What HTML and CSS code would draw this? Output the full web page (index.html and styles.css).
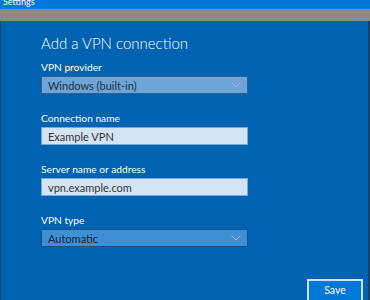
FILE: index.html
```html
<!DOCTYPE html>
<html>
<head>
<meta charset="utf-8">
<link rel="stylesheet" href="styles.css">
</head>
<body>
<div class="window">
  <div class="titlebar"><span class="apptitle">Settings</span></div>
  <div class="greybar"></div>
  <div class="panel">
    <div class="content">
      <h1 class="heading">Add a VPN connection</h1>
      <div class="field">
        <div class="label">VPN provider</div>
        <div class="select select-provider"><span>Windows (built-in)</span><svg class="chev" width="10" height="6" viewBox="0 0 10 6"><path d="M0.5 0.5 L5 5 L9.5 0.5" fill="none" stroke="#9ab7d3" stroke-width="1"/></svg></div>
      </div>
      <div class="field">
        <div class="label">Connection name</div>
        <div class="input">Example VPN</div>
      </div>
      <div class="field">
        <div class="label">Server name or address</div>
        <div class="input">vpn.example.com</div>
      </div>
      <div class="field">
        <div class="label">VPN type</div>
        <div class="select select-type"><span>Automatic</span><svg class="chev" width="10" height="6" viewBox="0 0 10 6"><path d="M0.5 0.5 L5 5 L9.5 0.5" fill="none" stroke="#8fbbe3" stroke-width="1"/></svg></div>
      </div>
    </div>
    <div class="footer">
      <button class="save">Save</button>
    </div>
  </div>
</div>
</body>
</html>
```
FILE: styles.css
```css
html, body {
  margin: 0;
  padding: 0;
}
body {
  width: 370px;
  height: 300px;
  overflow: hidden;
  font-family: Lato, "Open Sans", sans-serif;
  background: #0063b1;
}
.window {
  display: flex;
  flex-direction: column;
  height: 300px;
}
.titlebar {
  height: 9px;
  background: #0078d7;
  overflow: hidden;
  padding-left: 3px;
}
.apptitle {
  display: block;
  color: #ffffff;
  font-size: 9px;
  line-height: 9px;
  margin-top: -3px;
}
.greybar {
  height: 12px;
  background: #8a8a8a;
}
.panel {
  flex: 1;
  background: #0063b1;
  border-left: 1px solid #16416b;
  border-right: 2px solid #16416b;
  display: flex;
  flex-direction: column;
  justify-content: space-between;
}
.content {
  padding: 12px 0 0 40px;
}
.heading {
  margin: 0 0 8px 0;
  font-weight: 300;
  font-size: 15px;
  line-height: 20px;
  color: #ffffff;
}
.field {
  margin-bottom: 18px;
}
.label {
  color: #ffffff;
  font-size: 10.2px;
  line-height: 12px;
  margin-bottom: 3px;
}
.select, .input {
  box-sizing: border-box;
  width: 207px;
  height: 18px;
  display: flex;
  align-items: center;
  padding: 0 6px;
  font-size: 11px;
  color: #1c1c1c;
}
.select {
  justify-content: space-between;
  border: 1px solid #2e5f8f;
}
.select-provider {
  background: #6ea5d6;
  color: #1d2f40;
}
.select-type {
  background: #3d8fd6;
  border-color: #1b4f80;
  color: #10243a;
}
.chev {
  margin-right: 0;
}
.input {
  background: #d3e5f4;
  border: 1px solid #7aa9d3;
  color: #333333;
}
.footer {
  display: flex;
  justify-content: flex-end;
  padding-right: 5px;
}
.save {
  box-sizing: border-box;
  width: 56px;
  height: 21px;
  background: #0078d7;
  border: 2px solid #cfe3f5;
  border-bottom: none;
  color: #ffffff;
  font-family: Lato, "Open Sans", sans-serif;
  font-size: 10.5px;
  padding: 0;
  line-height: 17px;
}
```
